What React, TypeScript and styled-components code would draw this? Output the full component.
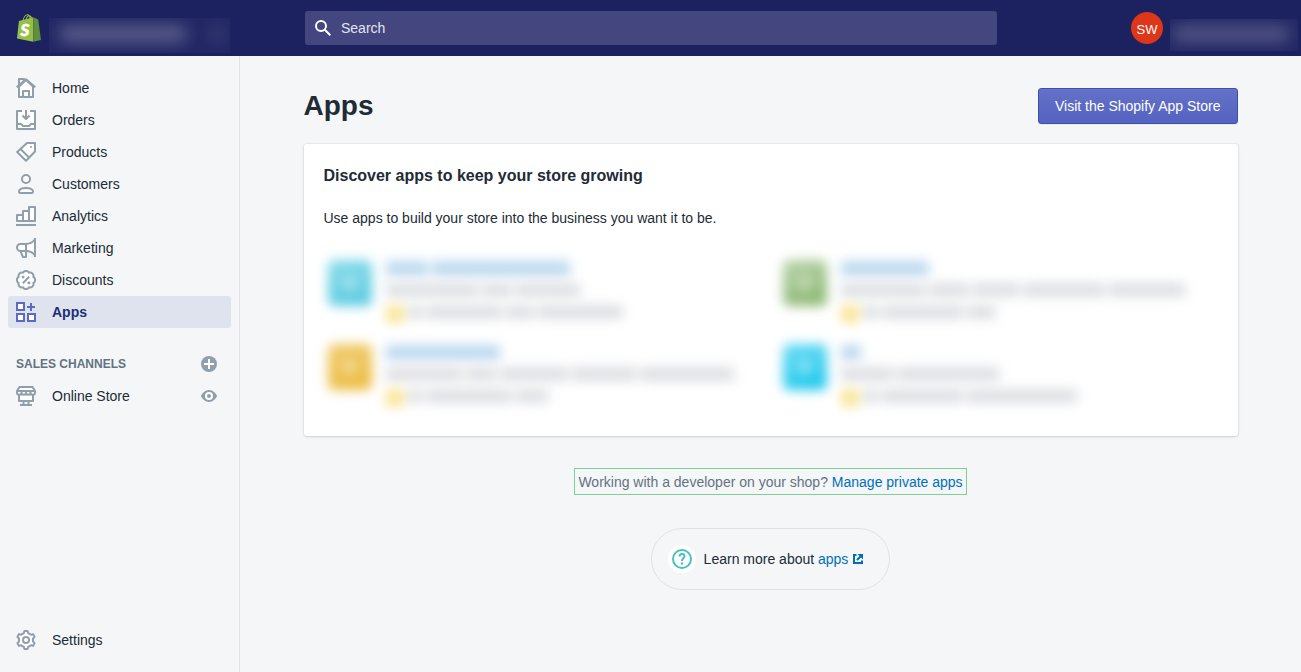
import React from "react";
import styled, { createGlobalStyle } from "styled-components";

const GlobalStyle = createGlobalStyle`
  *, *::before, *::after { box-sizing: border-box; }
  body {
    margin: 0;
    background: #f4f6f8;
    color: #212b36;
    font-family: "Liberation Sans", Arial, sans-serif;
    font-size: 14px;
    line-height: 20px;
  }
  a { color: #006fbb; text-decoration: none; }
`;

/* ---------- Frame ---------- */

const Frame = styled.div`
  display: flex;
  flex-direction: column;
  min-height: 100vh;
`;

const TopBar = styled.header`
  display: flex;
  align-items: center;
  height: 56px;
  background: #1c2260;
`;

const Brand = styled.div`
  display: flex;
  align-items: center;
  flex: none;
  width: 240px;
  height: 56px;
  padding-left: 17px;
  gap: 8px;
`;

const BrandLink = styled.a`
  display: flex;
`;

const Redacted = styled.div<{ $width: number; $height: number; $inset: number }>`
  display: flex;
  align-items: center;
  width: ${(p) => p.$width}px;
  height: ${(p) => p.$height}px;
  padding: 0 ${(p) => p.$inset}px;
  gap: 24px;
  margin-top: 14px;
  overflow: hidden;
  background: rgba(255, 255, 255, 0.03);
`;

const Smudge = styled.span<{ $width: number; $strength: number }>`
  flex: none;
  width: ${(p) => p.$width}px;
  height: 16px;
  margin-bottom: 2px;
  border-radius: 8px;
  background: rgba(255, 255, 255, ${(p) => p.$strength});
  filter: blur(8px);
`;

const SearchBox = styled.label`
  display: flex;
  align-items: center;
  flex: 1;
  max-width: 692px;
  height: 34px;
  margin-left: 65px;
  padding: 0 10px;
  gap: 10px;
  border-radius: 3px;
  background: #444680;
`;

const SearchInput = styled.input`
  flex: 1;
  min-width: 0;
  padding: 0;
  border: 0;
  outline: 0;
  background: transparent;
  color: #fff;
  font: inherit;
  &::placeholder { color: #e3e4ee; opacity: 1; }
`;

const Account = styled.div`
  display: flex;
  align-items: center;
  margin-left: auto;
  padding-right: 3px;
  gap: 7px;
`;

const Avatar = styled.button`
  width: 32px;
  height: 32px;
  padding: 3px 0 0;
  border: 0;
  border-radius: 50%;
  background: #de3618;
  color: #fff;
  font: inherit;
  font-size: 13px;
  text-align: center;
`;

const Body = styled.div`
  display: flex;
  flex: 1;
`;

/* ---------- Sidebar ---------- */

const Sidebar = styled.nav`
  display: flex;
  flex-direction: column;
  flex: none;
  width: 240px;
  padding: 16px 8px;
  border-right: 1px solid #dfe3e8;
`;

const NavList = styled.ul<{ $bottom?: boolean }>`
  margin: ${(p) => (p.$bottom ? "auto 0 0" : "0")};
  padding: 0;
  list-style: none;
`;

const NavRow = styled.li<{ $active?: boolean }>`
  display: flex;
  align-items: center;
  height: 32px;
  padding: 0 14px 0 8px;
  border-radius: 3px;
  background: ${(p) => (p.$active ? "#dfe3ee" : "transparent")};
`;

const NavLink = styled.a<{ $active?: boolean }>`
  display: flex;
  align-items: center;
  flex: 1;
  gap: 16px;
  color: ${(p) => (p.$active ? "#202e78" : "#212b36")};
  font-weight: ${(p) => (p.$active ? 700 : 400)};
  svg { color: ${(p) => (p.$active ? "#5c6ac4" : "#919eab")}; }
`;

const NavHeading = styled.div`
  display: flex;
  align-items: center;
  justify-content: space-between;
  height: 32px;
  margin-top: 20px;
  padding: 0 14px 0 8px;
`;

const NavHeadingText = styled.h2`
  margin: 0;
  color: #637381;
  font-size: 12px;
  font-weight: 700;
  line-height: 16px;
  text-transform: uppercase;
`;

const IconButton = styled.button`
  display: flex;
  padding: 0;
  border: 0;
  background: none;
  color: #919eab;
`;

/* ---------- Page ---------- */

const Main = styled.main`
  flex: 1;
  min-width: 0;
`;

const Page = styled.div`
  max-width: 998px;
  margin: 0 auto;
  padding: 32px;
`;

const PageHeader = styled.div`
  display: flex;
  align-items: center;
  justify-content: space-between;
  margin-bottom: 20px;
`;

const Title = styled.h1`
  margin: 0;
  font-size: 28px;
  font-weight: 700;
  line-height: 36px;
`;

const PrimaryButton = styled.button`
  height: 36px;
  padding: 0 16px;
  border: 1px solid #3f4eae;
  border-radius: 3px;
  background: linear-gradient(to bottom, #6371c7, #5563c1);
  box-shadow: inset 0 1px 0 #6774c8, 0 1px 0 rgba(22, 29, 37, 0.05);
  color: #fff;
  font: inherit;
`;

const Card = styled.section`
  padding: 20px 20px 32px;
  border-radius: 3px;
  background: #fff;
  box-shadow: 0 0 0 1px rgba(63, 63, 68, 0.05), 0 1px 3px rgba(63, 63, 68, 0.15);
`;

const CardTitle = styled.h2`
  margin: 0;
  font-size: 16px;
  font-weight: 700;
  line-height: 24px;
`;

const CardText = styled.p`
  margin: 20px 0 28px;
`;

const AppGrid = styled.div`
  display: grid;
  grid-template-columns: 1fr 1fr;
  gap: 20px 16px;
`;

const AppItem = styled.div`
  display: flex;
  height: 64px;
  padding: 4px;
  gap: 14px;
`;

const AppTile = styled.div<{ $from: string; $to: string }>`
  display: flex;
  align-items: center;
  justify-content: center;
  flex: none;
  width: 44px;
  height: 46px;
  border-radius: 6px;
  background: linear-gradient(160deg, ${(p) => p.$from}, ${(p) => p.$to});
  filter: blur(6px);
`;

const TileGlyph = styled.span`
  width: 16px;
  height: 16px;
  border-radius: 50%;
  background: rgba(255, 255, 255, 0.35);
`;

const AppLines = styled.div`
  display: flex;
  flex-direction: column;
  padding-top: 1px;
  gap: 8px;
`;

const AppLine = styled.div`
  display: flex;
  align-items: center;
  height: 14px;
  gap: 4px;
  filter: blur(6px);
`;

const Word = styled.span<{ $width: number; $tone: "link" | "text" }>`
  flex: none;
  width: ${(p) => p.$width}px;
  height: ${(p) => (p.$tone === "link" ? 15 : 14)}px;
  background: ${(p) => (p.$tone === "link" ? "#bbd9ef" : "#dddfe3")};
`;

const Star = styled.span`
  flex: none;
  width: 18px;
  height: 18px;
  margin-top: 3px;
  border-radius: 4px;
  background: #fae596;
`;

const FooterNotes = styled.div`
  display: flex;
  flex-direction: column;
  align-items: center;
  gap: 33px;
  margin-top: 32px;
`;

const DeveloperNote = styled.p`
  margin: 0;
  padding: 3px 3px 2px;
  border: 1px solid #7dd195;
  color: #637381;
`;

const HelpPill = styled.div`
  display: flex;
  align-items: center;
  height: 62px;
  padding: 0 26px 0 16px;
  gap: 8px;
  border: 1px solid #dfe3e8;
  border-radius: 31px;
`;

const HelpBadge = styled.span`
  display: flex;
  align-items: center;
  justify-content: center;
  width: 28px;
  height: 28px;
  border-radius: 50%;
  background: #fff;
`;

const HelpLink = styled.a`
  display: inline-flex;
  align-items: center;
  gap: 5px;
`;

/* ---------- Icons ---------- */

const Icon = ({ children }: { children: React.ReactNode }) => (
  <svg width="20" height="20" viewBox="0 0 20 20" fill="#fff" stroke="currentColor" strokeWidth="2" strokeLinejoin="round" aria-hidden="true">
    {children}
  </svg>
);

const HomeIcon = () => (
  <Icon>
    <path d="M3 8V1h5v2" fill="none" />
    <path d="M3 8.500V19h14V8.500L10 2z" />
    <path d="M.7 9.300 10 1.300l9.300 8" fill="none" />
    <path d="M7 19v-6h6v6" fill="none" />
  </Icon>
);

const OrdersIcon = () => (
  <Icon>
    <path d="M6 1H1v18h18V1h-5" />
    <path d="M1 14h4l2 2h6l2-2h4M10 0v8.500M6.500 5.500 10 9l3.500-3.500" fill="none" />
  </Icon>
);

const ProductsIcon = () => (
  <Icon>
    <path d="M11 1h8v8.500L10 18.700 1.200 10z" />
    <path d="m4.500 7 8.800 8.800" fill="none" />
    <circle cx="15" cy="5" r="1" fill="currentColor" stroke="none" />
  </Icon>
);

const CustomersIcon = () => (
  <Icon>
    <circle cx="10" cy="5" r="4" />
    <path d="M10 14c-4 0-7 1.500-7 3.500 0 1 .5 1.500 1.500 1.500h11c1 0 1.500-.5 1.500-1.500 0-2-3-3.500-7-3.500z" />
  </Icon>
);

const AnalyticsIcon = () => (
  <Icon>
    <path d="M1 15V9h6V5h6V1h6v14z" />
    <path d="M7 15V9M13 15V5M0 19h20" fill="none" />
  </Icon>
);

const MarketingIcon = () => (
  <Icon>
    <path d="M4.500 13 7 19h3v-6" />
    <path d="M19 1.500c-2 2.500-5 4.500-9 4.500H4.500a3.500 3.500 0 0 0 0 7H10c4 0 7 1.500 9 4.500z" />
    <path d="M10 6v7M19 0v19" fill="none" />
  </Icon>
);

const DiscountsIcon = () => (
  <svg width="20" height="20" viewBox="1 1 22 22" fill="#fff" stroke="currentColor" strokeWidth="2.200" aria-hidden="true">
    <path d="M3.850 8.620a4 4 0 0 1 4.780-4.770 4 4 0 0 1 6.740 0 4 4 0 0 1 4.780 4.780 4 4 0 0 1 0 6.740 4 4 0 0 1-4.770 4.780 4 4 0 0 1-6.750 0 4 4 0 0 1-4.780-4.770 4 4 0 0 1 0-6.760Z" />
    <path d="m8.500 15.500 7-7" />
    <circle cx="8.800" cy="8.800" r="1.600" fill="currentColor" stroke="none" />
    <circle cx="15.200" cy="15.200" r="1.600" fill="currentColor" stroke="none" />
  </svg>
);

const AppsIcon = () => (
  <svg width="20" height="20" viewBox="0 0 20 20" fill="#fff" stroke="currentColor" strokeWidth="2" aria-hidden="true">
    <rect x="1" y="1" width="7" height="7" />
    <rect x="1" y="12" width="7" height="7" />
    <rect x="12" y="12" width="7" height="7" />
    <path d="M15 1v8M11 5h8" fill="none" />
  </svg>
);

const StoreIcon = () => (
  <Icon>
    <path d="M3 8v7h14V8" />
    <path d="M3.500 1h13L19 5v1.500a2.200 2.200 0 0 1-4.500 0 2.200 2.200 0 0 1-4.500 0 2.200 2.200 0 0 1-4.500 0 2.200 2.200 0 0 1-4.500 0V5z" />
    <path d="M2 5h16M7.500 15v3M12.500 15v3M4 19h12" fill="none" />
  </Icon>
);

const SettingsIcon = () => (
  <Icon>
    <path d="M7.800 3.200 8.400 1h3.200l.6 2.200 2.600 1.500 2.200-.6 1.600 2.800L17 8.500v3l1.600 1.600-1.600 2.800-2.200-.6-2.600 1.500-.6 2.200H8.400l-.6-2.200-2.600-1.500-2.200.6-1.600-2.800L3 11.500v-3L1.400 6.900 3 4.100l2.200.6z" />
    <circle cx="10" cy="10" r="3" />
  </Icon>
);

const PlusIcon = () => (
  <svg width="16" height="16" viewBox="0 0 16 16" aria-hidden="true">
    <circle cx="8" cy="8" r="8" fill="currentColor" />
    <path d="M8 3v10M3 8h10" stroke="#fff" strokeWidth="2" />
  </svg>
);

const EyeIcon = () => (
  <svg width="16" height="16" viewBox="0 0 16 16" aria-hidden="true">
    <path d="M8 2C3.500 2 .3 6.500 0 8c.3 1.500 3.500 6 8 6s7.700-4.500 8-6c-.3-1.500-3.500-6-8-6z" fill="currentColor" />
    <circle cx="8" cy="8" r="3" fill="currentColor" stroke="#fff" strokeWidth="2" />
  </svg>
);

const SearchIcon = () => (
  <svg width="16" height="16" viewBox="0 0 16 16" fill="none" stroke="#fff" strokeWidth="2" aria-hidden="true">
    <circle cx="6" cy="6" r="5" />
    <path d="m9.500 9.500 5.800 5.800" />
  </svg>
);

const QuestionIcon = () => (
  <svg width="20" height="20" viewBox="0 0 20 20" fill="none" stroke="#47c1bf" strokeWidth="2" aria-hidden="true">
    <circle cx="10" cy="10" r="9" />
    <path d="M7.500 7.500C7.500 6 8.500 5 10 5s2.500.9 2.500 2.200c0 1.800-2.500 2-2.500 4.800" />
    <circle cx="10" cy="14.500" r="1.200" fill="#47c1bf" stroke="none" />
  </svg>
);

const ExternalIcon = () => (
  <svg width="10" height="10" viewBox="0 0 10 10" fill="none" stroke="currentColor" strokeWidth="2" aria-hidden="true">
    <path d="M3.500 1H1v8h8V6.500M4 6l4-4" />
    <path d="M4.500 0H10v5.500z" fill="currentColor" stroke="none" />
  </svg>
);

const BagLogo = () => (
  <svg width="24" height="28" viewBox="0 0 24 28" aria-label="Shopify" role="img">
    <path d="M6 7C6.500 3.500 8.500.8 10.500.8c1.700 0 2.500 2 2.600 4.500M9 6c.5-2.500 2-4.300 3.200-4.300S14.500 3 14.700 5" fill="none" stroke="#95bf47" strokeWidth="1.100" />
    <path d="M1.900 6.900 16.300 3.200v24.500L0 24.400z" fill="#95bf47" />
    <path d="m16.300 3.200 1.700.9 3.200 1.500L24 26l-7.700 1.700z" fill="#5e8e3e" />
    <text x="3.500" y="21.500" fill="#fff" stroke="#fff" strokeWidth=".8" fontFamily="Lato, Liberation Sans, sans-serif" fontSize="17" fontStyle="italic" fontWeight="700">S</text>
  </svg>
);

/* ---------- Data ---------- */

const navItems = [
  { label: "Home", icon: <HomeIcon /> },
  { label: "Orders", icon: <OrdersIcon /> },
  { label: "Products", icon: <ProductsIcon /> },
  { label: "Customers", icon: <CustomersIcon /> },
  { label: "Analytics", icon: <AnalyticsIcon /> },
  { label: "Marketing", icon: <MarketingIcon /> },
  { label: "Discounts", icon: <DiscountsIcon /> },
  { label: "Apps", icon: <AppsIcon />, active: true },
];

const hiddenApps = [
  { from: "#8adce9", to: "#55c8e0", title: [42, 138], summary: [92, 30, 64], rating: [14, 76, 27, 86] },
  { from: "#b9d3aa", to: "#86b56c", title: [88], summary: [84, 40, 46, 82, 76], rating: [16, 80, 28] },
  { from: "#f0cc70", to: "#ebba3a", title: [114], summary: [76, 30, 68, 64, 94], rating: [14, 86, 32] },
  { from: "#6ddbf3", to: "#14c6ec", title: [20], summary: [52, 102], rating: [14, 82, 110] },
];

/* ---------- App ---------- */

export default function App() {
  return (
    <Frame>
      <GlobalStyle />
      <TopBar>
        <Brand>
          <BrandLink href="#"><BagLogo /></BrandLink>
          <Redacted $width={181} $height={35} $inset={10}>
            <Smudge $width={128} $strength={0.26} />
            <Smudge $width={12} $strength={0.12} />
          </Redacted>
        </Brand>
        <SearchBox>
          <SearchIcon />
          <SearchInput type="text" placeholder="Search" aria-label="Search" />
        </SearchBox>
        <Account>
          <Avatar type="button">SW</Avatar>
          <Redacted $width={128} $height={32} $inset={2}>
            <Smudge $width={118} $strength={0.22} />
          </Redacted>
        </Account>
      </TopBar>

      <Body>
        <Sidebar>
          <NavList>
            {navItems.map((item) => (
              <NavRow key={item.label} $active={item.active}>
                <NavLink href="#" $active={item.active}>{item.icon}{item.label}</NavLink>
              </NavRow>
            ))}
          </NavList>
          <NavHeading>
            <NavHeadingText>Sales channels</NavHeadingText>
            <IconButton type="button" aria-label="Add sales channel"><PlusIcon /></IconButton>
          </NavHeading>
          <NavList>
            <NavRow>
              <NavLink href="#"><StoreIcon />Online Store</NavLink>
              <IconButton type="button" aria-label="View online store"><EyeIcon /></IconButton>
            </NavRow>
          </NavList>
          <NavList $bottom>
            <NavRow>
              <NavLink href="#"><SettingsIcon />Settings</NavLink>
            </NavRow>
          </NavList>
        </Sidebar>

        <Main>
          <Page>
            <PageHeader>
              <Title>Apps</Title>
              <PrimaryButton type="button">Visit the Shopify App Store</PrimaryButton>
            </PageHeader>
            <Card>
              <CardTitle>Discover apps to keep your store growing</CardTitle>
              <CardText>Use apps to build your store into the business you want it to be.</CardText>
              <AppGrid>
                {hiddenApps.map((app, i) => (
                  <AppItem key={i}>
                    <AppTile $from={app.from} $to={app.to}><TileGlyph /></AppTile>
                    <AppLines>
                      <AppLine>{app.title.map((w, j) => <Word key={j} $width={w} $tone="link" />)}</AppLine>
                      <AppLine>{app.summary.map((w, j) => <Word key={j} $width={w} $tone="text" />)}</AppLine>
                      <AppLine>
                        <Star />
                        {app.rating.map((w, j) => <Word key={j} $width={w} $tone="text" />)}
                      </AppLine>
                    </AppLines>
                  </AppItem>
                ))}
              </AppGrid>
            </Card>
            <FooterNotes>
              <DeveloperNote>
                Working with a developer on your shop? <a href="#">Manage private apps</a>
              </DeveloperNote>
              <HelpPill>
                <HelpBadge><QuestionIcon /></HelpBadge>
                <span>Learn more about <HelpLink href="#">apps<ExternalIcon /></HelpLink></span>
              </HelpPill>
            </FooterNotes>
          </Page>
        </Main>
      </Body>
    </Frame>
  );
}
